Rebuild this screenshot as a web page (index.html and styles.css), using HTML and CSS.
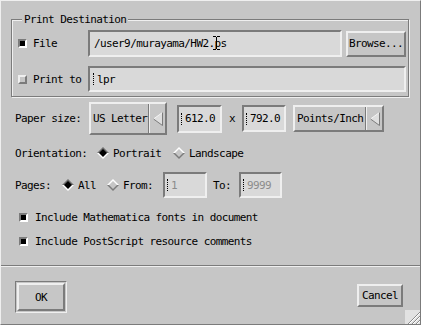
FILE: index.html
```html
<!DOCTYPE html>
<html lang="en">
<head>
  <meta charset="UTF-8">
  <meta name="viewport" content="width=device-width,initial-scale=1">
  <title>Print</title>
  <link rel="stylesheet" href="styles.css">
</head>
<body>
<div class="dialog">
  <div class="main">

    <!-- Destino -->
    <fieldset class="dest">
      <legend>Print Destination</legend>
      <div class="drow first">
        <span class="check"><span class="tog on"></span>File</span>
        <div class="field file">/user9/murayama/HW2.ps
          <svg class="pointer" width="7" height="14" viewBox="0 0 7 14"><path d="M0 0.5h3M4 0.5h3M3.5 1v12M0 13.5h3M4 13.5h3" stroke="#000" fill="none"/></svg>
        </div>
        <button class="btn browse">Browse...</button>
      </div>
      <div class="drow">
        <span class="check"><span class="tog"></span>Print to</span>
        <div class="field cmd"><span class="caret"></span>lpr</div>
      </div>
    </fieldset>

    <div class="row paper">
      <span class="lbl l-paper">Paper size:</span>
      <div class="option letter">
        <span class="opt-text">US Letter</span>
        <span class="opt-arrow"><svg width="10" height="14" viewBox="0 0 10 14"><path d="M0.5 7L9.5 0.5V13.5Z" fill="#dedede"/><path d="M0.5 7L9.5 0.5" stroke="#f4f4f4" fill="none"/><path d="M0.5 7L9.5 13.5V0.5" stroke="#7b7b7b" fill="none"/></svg></span>
      </div>
      <div class="field num wdt"><span class="caret"></span>612.0</div>
      <span class="times">x</span>
      <div class="field num hgt"><span class="caret"></span>792.0</div>
      <div class="option units">
        <span class="opt-text">Points/Inch</span>
        <span class="opt-arrow"><svg width="10" height="14" viewBox="0 0 10 14"><path d="M0.5 7L9.5 0.5V13.5Z" fill="#dedede"/><path d="M0.5 7L9.5 0.5" stroke="#f4f4f4" fill="none"/><path d="M0.5 7L9.5 13.5V0.5" stroke="#7b7b7b" fill="none"/></svg></span>
      </div>
    </div>

    <div class="row orient">
      <span class="lbl l-orient">Orientation:</span>
      <span class="radio portrait">
        <svg width="12" height="12" viewBox="0 0 12 12"><path d="M0 6L6 0L12 6Z" fill="#6e6e6e"/><path d="M0 6L6 12L12 6Z" fill="#fff"/><path d="M2 6L6 2L10 6L6 10Z" fill="#000"/></svg>Portrait
      </span>
      <span class="radio">
        <svg width="12" height="12" viewBox="0 0 12 12"><path d="M0 6L6 0L12 6Z" fill="#fff"/><path d="M0 6L6 12L12 6Z" fill="#7b7b7b"/><path d="M2 6L6 2L10 6L6 10Z" fill="#c6c6c6"/></svg>Landscape
      </span>
    </div>

    <div class="row pages">
      <span class="lbl l-pages">Pages:</span>
      <span class="radio all">
        <svg width="12" height="12" viewBox="0 0 12 12"><path d="M0 6L6 0L12 6Z" fill="#6e6e6e"/><path d="M0 6L6 12L12 6Z" fill="#fff"/><path d="M2 6L6 2L10 6L6 10Z" fill="#000"/></svg>All
      </span>
      <span class="radio from">
        <svg width="12" height="12" viewBox="0 0 12 12"><path d="M0 6L6 0L12 6Z" fill="#fff"/><path d="M0 6L6 12L12 6Z" fill="#7b7b7b"/><path d="M2 6L6 2L10 6L6 10Z" fill="#c6c6c6"/></svg>From:
      </span>
      <div class="field num pfrom off"><span class="caret"></span>1</div>
      <span class="lbl l-to">To:</span>
      <div class="field num pto off"><span class="caret"></span>9999</div>
    </div>

    <div class="row opt first-opt">
      <span class="tog on"></span>Include Mathematica fonts in document
    </div>
    <div class="row opt">
      <span class="tog on"></span>Include PostScript resource comments
    </div>
  </div>

  <div class="actions">
    <div class="default"><button class="btn ok">OK</button></div>
    <button class="btn cancel">Cancel</button>
  </div>

  <svg class="grip" width="15" height="14" viewBox="0 0 15 14">
    <rect width="15" height="14" fill="#e2e2e2"/>
    <path d="M3 14L15 2M7 14L15 6M11 14L15 10" stroke="#8a8a8a" fill="none"/>
    <path d="M4 14L15 3M8 14L15 7M12 14L15 11" stroke="#fff" fill="none"/>
  </svg>
</div>
</body>
</html>
```

FILE: styles.css
```css
*{margin:0;padding:0;box-sizing:border-box;}
body{
  width:421px; height:325px; overflow:hidden;
  background:#c6c6c6; color:#000;
  font:11px/13px "DejaVu Sans Mono", monospace;
  letter-spacing:-0.6px;
  white-space:nowrap;
}
/* Marco de la ventana */
.dialog{
  position:relative; height:325px;
  display:flex; flex-direction:column;
  border:1px solid #7b7b7b;
  border-top-color:#efefef; border-left-color:#efefef;
}
.main{flex:1; padding:12px 10px 0 10px;}

/* Grupo "Print Destination" */
.dest{
  width:398px;
  border:1px solid #7b7b7b;
  box-shadow:inset 1px 1px 0 #efefef, 1px 1px 0 #efefef;
  padding:4px 2px 4px 5px;
}
.dest legend{
  margin-left:5px; padding:0 2px;
  line-height:13px; background:#c6c6c6;
}
.drow{display:flex; align-items:center; height:26px;}
.drow.first{height:27px; margin-bottom:9px;}
.check{display:flex; align-items:center; gap:6px; width:71px; padding-left:1px; flex:none;}

/* Casillas */
.tog{
  width:9px; height:9px; flex:none;
  border:2px solid; border-color:#efefef #7b7b7b #7b7b7b #efefef;
  background:#c6c6c6;
}
.tog.on{border-color:#7b7b7b #fff #fff #7b7b7b; background:#000;}

/* Campos de texto */
.field{
  position:relative; height:100%;
  display:flex; align-items:center;
  padding:0 4px; white-space:nowrap;
  background:#d9d9d9;
  border:2px solid; border-color:#7b7b7b #efefef #efefef #7b7b7b;
}
.field.file{width:254px;}
.field.cmd{width:318px; padding-left:2px;}
.field.num{padding-left:1px; flex:none;}
.field.off{color:#8c8c8c;}
.caret{
  display:inline-block; width:4px; height:12px; flex:none;
  border-left:1px dotted #000; margin-left:1px;
}
.pointer{position:absolute; left:123px; top:4px;}

/* Botones */
.btn{
  height:26px; background:#c6c6c6; color:#000;
  font:inherit; letter-spacing:inherit;
  border:2px solid; border-color:#efefef #7b7b7b #7b7b7b #efefef;
}
.browse{width:60px; margin-left:4px; height:26px;}

/* Filas sueltas */
.row{display:flex; align-items:center; padding-left:4px;}
.lbl{flex:none;}
.paper{height:33px; margin-top:5px;}
.l-paper{width:74px;}
.option{
  display:flex; flex:none;
  border:2px solid; border-color:#efefef #7b7b7b #7b7b7b #efefef;
}
.opt-text{
  flex:1; display:flex; align-items:center; padding-left:2px;
  border-right:1px solid #7b7b7b; white-space:nowrap;
}
.opt-arrow{
  width:16px; flex:none; display:flex; align-items:center; justify-content:center;
  border-left:1px solid #efefef;
}
.letter{width:78px; height:33px;}
.units{width:91px; height:27px; margin-left:7px;}
.wdt{width:45px; height:28px; margin-left:10px;}
.hgt{width:44px; height:27px;}
.times{width:20px; text-align:center;}

.orient{height:14px; margin-top:11px;}
.l-orient{width:82px;}
.radio{display:flex; align-items:center; gap:4px; flex:none;}
.radio svg{flex:none;}
.portrait{width:76px;}

.pages{height:26px; margin-top:12px;}
.l-pages{width:47px;}
.all{width:45px;}
.from{width:56px;}
.pfrom{width:44px;}
.l-to{width:26px; margin-left:6px;}
.pto{width:43px;}

.opt{height:13px; padding-left:8px; gap:7px; margin-top:11px;}
.opt.first-opt{margin-top:13px;}

/* Botonera inferior */
.actions{
  flex:none; height:59px;
  display:flex; align-items:center; justify-content:space-between;
  padding:0 17px 0 14px;
  border-top:1px solid #7b7b7b;
  box-shadow:inset 0 1px 0 #efefef;
}
.default{
  width:52px; height:32px; margin-top:4px; padding:1px;
  border:1px solid; border-color:#7b7b7b #efefef #efefef #7b7b7b;
}
.ok{width:100%; height:100%;}
.cancel{width:46px; height:23px;}
.grip{position:absolute; right:0; bottom:0;}
```
